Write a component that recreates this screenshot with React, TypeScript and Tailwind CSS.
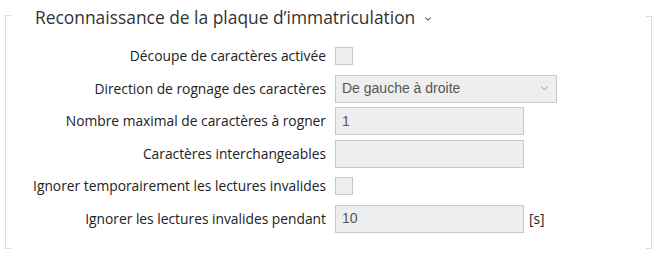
import { ChevronDown } from 'lucide-react';

const label = "text-right text-[13.8px] text-[#222] leading-none";
const field = "h-[28px] bg-[#eeeeee] border border-[#c8c8c8] px-[6px] flex items-center text-[14px] text-[#555] font-['Liberation_Sans',Arial,sans-serif]";

function Row({ text, children }: { text: string; children: React.ReactNode }) {
  return (
    <div className="flex flex-row items-center h-[28px]">
      <div className={`w-[315px] ${label}`}>{text}</div>
      <div className="ml-[9px] flex flex-row items-center">{children}</div>
    </div>
  );
}

function Checkbox() {
  return <div className="w-[18px] h-[18px] bg-[#eeeeee] border border-[#c8c8c8]" />;
}

function App() {
  return (
    <div className="flex flex-row w-[657px] h-[259px] bg-white px-[5px] font-['Open_Sans','Noto_Sans',sans-serif]">
      <div className="w-[6px] mt-[15px] mb-[10px] border-l border-t border-b border-[#dcdcdc]" />
      <div className="flex-1 flex flex-col">
        <div className="flex flex-row items-center mt-[4px] ml-[24px] h-[28px] gap-[8px]">
          <h1 className="text-[17.4px] text-[#333] leading-none">Reconnaissance de la plaque d’immatriculation</h1>
          {/* small caret next to the section title */}
          <ChevronDown className="w-[10px] h-[10px] text-[#444] mt-[2px]" strokeWidth={2.5} />
        </div>
        <div className="flex flex-col gap-[4.6px] mt-[10px]">
          <Row text="Découpe de caractères activée"><Checkbox /></Row>
          <Row text="Direction de rognage des caractères">
            <div className={`${field} w-[222px] justify-between`}>
              <span>De gauche à droite</span>
              <ChevronDown className="w-[11px] h-[11px] text-[#888]" strokeWidth={2} />
            </div>
          </Row>
          <Row text="Nombre maximal de caractères à rogner">
            <div className={`${field} w-[189px]`}>1</div>
          </Row>
          <Row text="Caractères interchangeables">
            <div className={`${field} w-[189px]`} />
          </Row>
          <Row text="Ignorer temporairement les lectures invalides"><Checkbox /></Row>
          <Row text="Ignorer les lectures invalides pendant">
            <div className={`${field} w-[189px]`}>10</div>
            <span className="ml-[5px] text-[13.8px] text-[#222]">[s]</span>
          </Row>
        </div>
      </div>
      <div className="w-[6px] mt-[16px] mb-[10px] border-r border-t border-b border-[#dcdcdc]" />
    </div>
  );
}

export default App
